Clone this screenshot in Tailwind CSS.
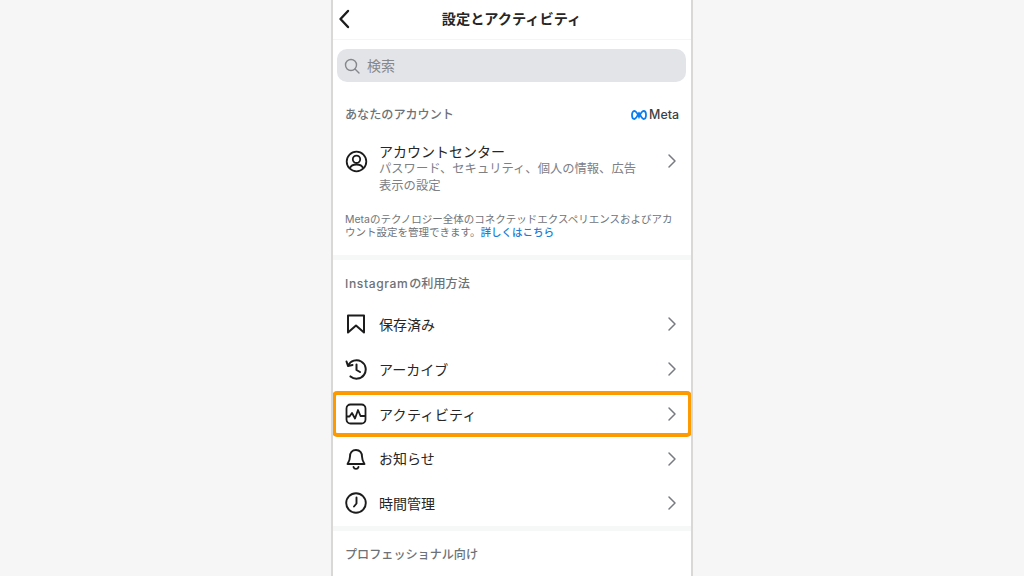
<!DOCTYPE html>
<html lang="ja">
<head>
    <meta charset="UTF-8">
    <title>設定とアクティビティ</title>
    <script src="https://cdn.jsdelivr.net/npm/@tailwindcss/browser@4"></script>
</head>
<body class="bg-[#f6f6f6] h-[576px] overflow-hidden flex justify-center font-['Inter','Noto_Sans_CJK_JP',sans-serif]">

    <!-- phone screen -->
    <div class="w-[362px] h-[576px] bg-white border-x-[2px] border-[#d9d8d6] flex flex-col overflow-hidden">

        <!-- header -->
        <div class="h-[40px] shrink-0 border-b border-[#f5f5f5] flex items-center relative">
            <svg class="absolute left-[3px] top-[9px]" width="16" height="20" viewBox="0 0 16 20" fill="none" stroke="#1c1c1c" stroke-width="2.4" stroke-linecap="round" stroke-linejoin="round"><path d="M12 2 4.500 10 12 18"/></svg>
            <div class="w-full pr-[1px] text-center text-[14.2px] font-bold text-[#262626] leading-none">設定とアクティビティ</div>
        </div>

        <!-- search -->
        <div class="ml-[4px] mr-[5px] mt-[9px] h-[33px] shrink-0 rounded-[10px] bg-[#e3e4e8] flex items-center pl-[7px] gap-[7px]">
            <svg width="16" height="16" viewBox="0 0 16 16" fill="none" stroke="#85878c" stroke-width="1.400" stroke-linecap="round"><circle cx="7" cy="7" r="5.500"/><path d="m11 11 4 4"/></svg>
            <span class="text-[14px] text-[#85878c] leading-none">検索</span>
        </div>

        <!-- your account -->
        <div class="flex items-center justify-between pl-[12px] pr-[12px] mt-[25px] h-[16px] shrink-0">
            <span class="text-[12.1px] font-medium text-[#6d7278]">あなたのアカウント</span>
            <span class="flex items-center gap-[2px]">
                <svg width="16" height="10" viewBox="0 0 16 10" fill="none" stroke="#0a7cf0" stroke-width="1.800"><path d="M8 7C6.500 3.500 5 1 3.400 1 1.900 1 1 2.800 1 5c0 2.300 1 4 2.400 4C5.300 9 6.500 5 8 3c1.500 2 2.700 6 4.600 6C14 9 15 7.300 15 5c0-2.200-.9-4-2.400-4C11 1 9.500 3.500 8 7Z"/></svg>
                <span class="text-[12.4px] font-medium text-[#3b3f45] leading-none">Meta</span>
            </span>
        </div>

        <!-- account center -->
        <div class="flex items-start mt-[20px] pl-[12px] pr-[14px] shrink-0">
            <svg class="mt-[7px] shrink-0" width="23" height="23" viewBox="0 0 23 23" fill="none" stroke="#1c1c1c" stroke-width="1.800"><circle cx="11.500" cy="11.500" r="9.800"/><circle cx="11.500" cy="9.300" r="3.700"/><path d="M4.800 18.300c1.200-3 3.600-3.800 6.700-3.800s5.500.8 6.700 3.800"/></svg>
            <div class="ml-[11px] w-[265px]">
                <div class="text-[14px] leading-[18px] text-[#262626]">アカウントセンター</div>
                <div class="text-[12.3px] leading-[16.500px] text-[#7d8085]">パスワード、セキュリティ、個人の情報、広告 表示の設定</div>
            </div>
            <svg class="ml-auto mt-[10px] shrink-0" width="10" height="16" viewBox="0 0 10 16" fill="none" stroke="#777b80" stroke-width="1.500" stroke-linecap="round" stroke-linejoin="round"><path d="m2 2 6 6-6 6"/></svg>
        </div>

        <p class="mx-[12px] mt-[19px] text-[10.5px] leading-[13px] text-[#70747a] shrink-0">Metaのテクノロジー全体のコネクテッドエクスペリエンスおよびアカウント設定を管理できます。<span class="inline-block leading-[13px] text-[#1c7fd6] font-medium">詳しくはこちら</span></p>

        <div class="h-[5px] mt-[16px] shrink-0 bg-[#f6f7f7]"></div>

        <!-- how you use instagram -->
        <div class="pl-[12px] mt-[16px] h-[16px] text-[12.1px] leading-[16px] font-medium text-[#6d7278] shrink-0"><span class="tracking-[0.6px] mr-[1px]">Instagram</span>の利用方法</div>

        <div class="mt-[10px] h-[44px] shrink-0 flex items-center pl-[12px] pr-[14px]">
            <svg width="22" height="22" viewBox="0 0 22 22" fill="none" stroke="#1c1c1c" stroke-width="2" stroke-linejoin="round"><path d="M3 2.500h16v17l-8-7-8 7Z"/></svg>
            <span class="ml-[12px] text-[14px] text-[#262626]">保存済み</span>
            <svg class="ml-auto" width="10" height="16" viewBox="0 0 10 16" fill="none" stroke="#777b80" stroke-width="1.500" stroke-linecap="round" stroke-linejoin="round"><path d="m2 2 6 6-6 6"/></svg>
        </div>

        <div class="mt-[1px] h-[44px] shrink-0 flex items-center pl-[12px] pr-[14px]">
            <svg width="22" height="22" viewBox="0 0 22 22" fill="none" stroke="#1c1c1c" stroke-width="2" stroke-linecap="round" stroke-linejoin="round"><path d="M3.200 7.500A9.200 9.200 0 1 1 5.500 18.400"/><path d="M1.500 3.500 3 8l4.500-1"/><path d="M11.500 6.500V12l3.500 2"/></svg>
            <span class="ml-[12px] text-[14px] text-[#262626]">アーカイブ</span>
            <svg class="ml-auto" width="10" height="16" viewBox="0 0 10 16" fill="none" stroke="#777b80" stroke-width="1.500" stroke-linecap="round" stroke-linejoin="round"><path d="m2 2 6 6-6 6"/></svg>
        </div>

        <!-- highlighted row -->
        <div class="h-[46px] -mx-[1px] shrink-0 flex items-center pl-[9px] pr-[11px] border-[4px] border-[#fd9a00] rounded-[5px]">
            <svg width="22" height="22" viewBox="0 0 22 22" fill="none" stroke="#1c1c1c" stroke-width="1.800" stroke-linejoin="round" stroke-linecap="round"><rect x="1.500" y="1.500" width="19" height="19" rx="4"/><path d="M2 13.500h2.500l2.500-3.500 3 5.500 3-8.500 2.500 6h4.500"/></svg>
            <span class="ml-[12px] text-[14px] tracking-[0.3px] text-[#262626]">アクティビティ</span>
            <svg class="ml-auto" width="10" height="16" viewBox="0 0 10 16" fill="none" stroke="#777b80" stroke-width="1.500" stroke-linecap="round" stroke-linejoin="round"><path d="m2 2 6 6-6 6"/></svg>
        </div>

        <div class="h-[43px] shrink-0 flex items-center pl-[12px] pr-[14px]">
            <svg width="22" height="22" viewBox="0 0 22 22" fill="none" stroke="#1c1c1c" stroke-width="1.900" stroke-linejoin="round" stroke-linecap="round"><path d="M11 2C7 2 5 5 5 8.500c0 3.500-1 5-2.500 7.500h17C18 13.500 17 12 17 8.500 17 5 15 2 11 2Z"/><path d="M8.500 19a2.600 2.600 0 0 0 5 0"/></svg>
            <span class="ml-[12px] text-[14px] text-[#262626]">お知らせ</span>
            <svg class="ml-auto" width="10" height="16" viewBox="0 0 10 16" fill="none" stroke="#777b80" stroke-width="1.500" stroke-linecap="round" stroke-linejoin="round"><path d="m2 2 6 6-6 6"/></svg>
        </div>

        <div class="mt-[1px] h-[44px] shrink-0 flex items-center pl-[12px] pr-[14px]">
            <svg width="22" height="22" viewBox="0 0 22 22" fill="none" stroke="#1c1c1c" stroke-width="1.900" stroke-linecap="round" stroke-linejoin="round"><circle cx="11" cy="11" r="9.800"/><path d="M11.500 5.500V11.500l-2.500 3"/></svg>
            <span class="ml-[12px] text-[14px] text-[#262626]">時間管理</span>
            <svg class="ml-auto" width="10" height="16" viewBox="0 0 10 16" fill="none" stroke="#777b80" stroke-width="1.500" stroke-linecap="round" stroke-linejoin="round"><path d="m2 2 6 6-6 6"/></svg>
        </div>

        <div class="h-[5px] mt-[1px] shrink-0 bg-[#f6f7f7]"></div>

        <div class="pl-[12px] mt-[16px] h-[16px] text-[12.1px] leading-[16px] font-medium text-[#6d7278] shrink-0">プロフェッショナル向け</div>
    </div>
</body>
</html>
